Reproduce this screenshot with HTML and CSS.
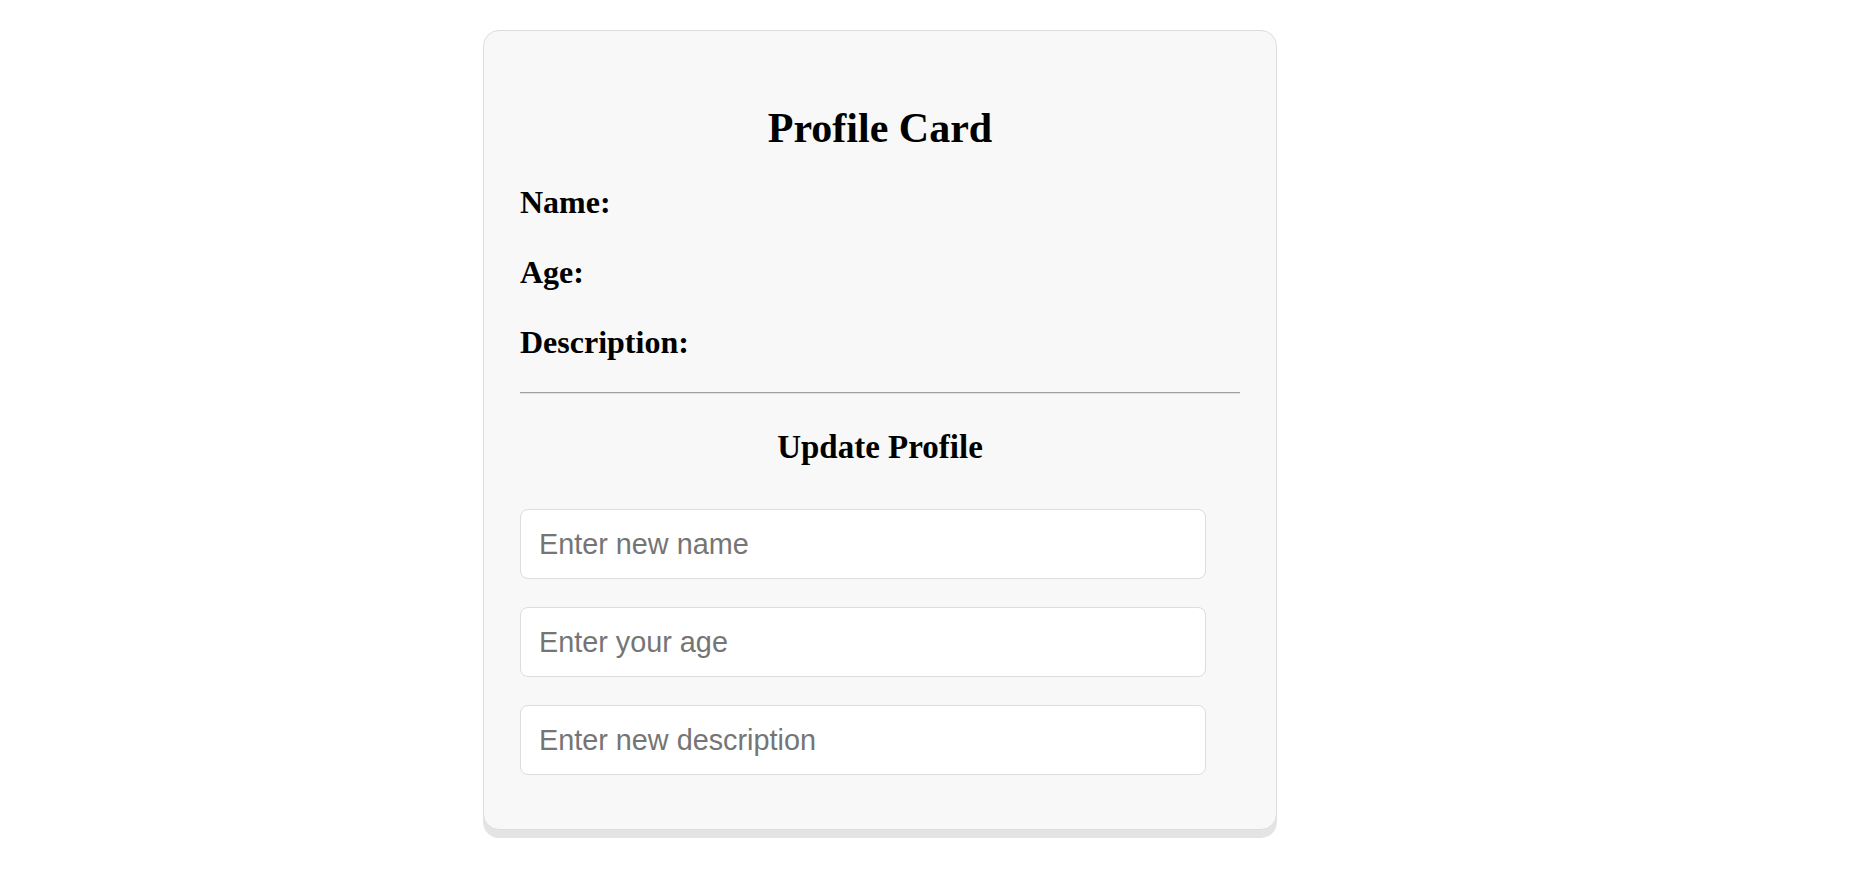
FILE: index.html
```html
<!DOCTYPE html>
<html lang="en">
<head>
<meta charset="utf-8">
<title>Profile Card</title>
<link rel="stylesheet" href="styles.css">
</head>
<body>
<div class="page">
  <div class="card">
    <h1 class="title">Profile Card</h1>
    <p class="field">Name:</p>
    <p class="field">Age:</p>
    <p class="field">Description:</p>
    <hr class="divider">
    <h2 class="subtitle">Update Profile</h2>
    <form class="form">
      <input class="input" type="text" placeholder="Enter new name">
      <input class="input" type="text" placeholder="Enter your age">
      <input class="input" type="text" placeholder="Enter new description">
    </form>
  </div>
</div>
</body>
</html>
```
FILE: styles.css
```css
html, body {
  margin: 0;
  padding: 0;
  background: #ffffff;
}
.page {
  padding: 30px 0 40px 483px;
  font-family: "Liberation Serif", "Times New Roman", serif;
  color: #000;
}
.card {
  width: 720px;
  padding: 36px 36px 54px 36px;
  background: #f8f8f8;
  border: 1px solid #dddddd;
  border-radius: 16px;
  box-shadow: 0 8px 0 #e4e4e4;
}
.title {
  margin: 37px 0 32px 0;
  font-size: 42px;
  line-height: 48px;
  font-weight: bold;
  text-align: center;
}
.field {
  margin: 0 0 33px 0;
  font-size: 32px;
  line-height: 37px;
  font-weight: bold;
}
.field:last-of-type {
  margin-bottom: 31px;
}
.divider {
  margin: 0;
  border-style: solid;
  border-width: 1px 0 1px 0;
  border-top-color: #a0a0a0;
  border-bottom-color: #e2e2e2;
}
.subtitle {
  margin: 35px 0 43px 0;
  font-size: 33px;
  line-height: 37px;
  font-weight: bold;
  text-align: center;
}
.form {
  display: flex;
  flex-direction: column;
  gap: 28px;
  margin: 0;
}
.input {
  width: 90%;
  box-sizing: content-box;
  margin: 0;
  padding: 18px;
  font-family: "Liberation Sans", Arial, sans-serif;
  font-size: 28.8px;
  line-height: 32px;
  height: 32px;
  color: #333;
  background: #ffffff;
  border: 1px solid #dddddd;
  border-radius: 8px;
  outline: none;
}
.input::placeholder {
  color: #757575;
}
```
